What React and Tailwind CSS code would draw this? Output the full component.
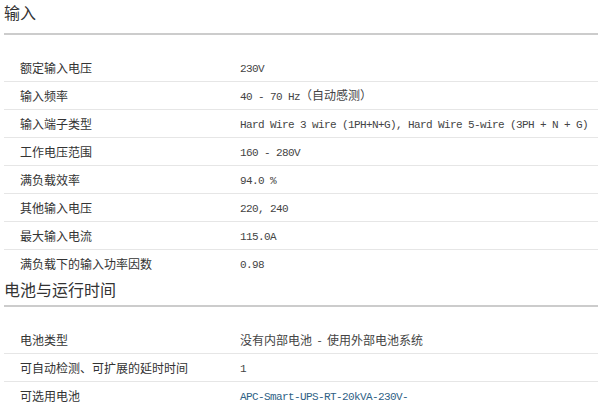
import React from 'react';

const mono = 'font-["Liberation_Mono","Noto_Sans_CJK_SC",monospace] text-[11px] tracking-[-0.6px]';

const inputRows = [
  ['额定输入电压', <span className={mono}>230V</span>],
  [
    '输入频率',
    <>
      <span className={mono}>40 - 70 Hz</span>
      <span>（自动感测）</span>
    </>,
  ],
  ['输入端子类型', <span className={mono}>Hard Wire 3 wire (1PH+N+G), Hard Wire 5-wire (3PH + N + G)</span>],
  ['工作电压范围', <span className={mono}>160 - 280V</span>],
  ['满负载效率', <span className={mono}>94.0 %</span>],
  ['其他输入电压', <span className={mono}>220, 240</span>],
  ['最大输入电流', <span className={mono}>115.0A</span>],
  ['满负载下的输入功率因数', <span className={mono}>0.98</span>],
];

const batteryRows = [
  ['电池类型', <span>没有内部电池 &nbsp;-&nbsp; 使用外部电池系统</span>],
  ['可自动检测、可扩展的延时时间', <span className={mono}>1</span>],
  ['可选用电池', <span className={`${mono} text-[#2f5f86]`}>APC-Smart-UPS-RT-20kVA-230V-</span>],
];

function Section({ title, rows, first }) {
  return (
    <section>
      <h2
        className={`text-[16px] leading-[24px] text-[#333] border-b-2 border-[#cccccc] ${
          first ? 'pb-[9px]' : 'pb-[4px] -mt-[1px]'
        }`}
      >
        {title}
      </h2>
      <div className="mt-[19px]">
        {rows.map(([label, value], i) => (
          <div
            key={i}
            className={`flex items-center h-[28px] ${
              i < rows.length - 1 ? 'border-b border-[#e6e6e6]' : ''
            }`}
          >
            <div className="w-[236px] shrink-0 pl-[16px] text-[#333]">{label}</div>
            <div className="flex-1 text-[#444] whitespace-nowrap">{value}</div>
          </div>
        ))}
      </div>
    </section>
  );
}

export default function App() {
  return (
    <div className='w-[598px] h-[408px] overflow-hidden bg-white pl-[4px] font-["Noto_Sans_CJK_SC","Liberation_Sans",sans-serif] text-[12px]'>
      <Section title="输入" rows={inputRows} first />
      <Section title="电池与运行时间" rows={batteryRows} />
    </div>
  );
}
